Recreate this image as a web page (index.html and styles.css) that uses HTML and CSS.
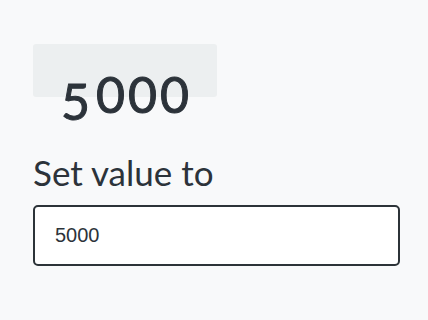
FILE: index.html
```html
<!DOCTYPE html>
<html lang="en">
<head>
<meta charset="utf-8">
<title>Counter</title>
<link rel="stylesheet" href="styles.css">
</head>
<body>
<main class="page">
  <div class="counter">
    <span class="digit digit-rolling">5</span><span class="digit">0</span><span class="digit">0</span><span class="digit">0</span>
  </div>
  <label class="field-label" for="value">Set value to</label>
  <input class="field-input" id="value" type="text" value="5000">
</main>
</body>
</html>
```
FILE: styles.css
```css
html, body {
  margin: 0;
  padding: 0;
  background: #f8f9fa;
}
.page {
  padding: 44px 28px 0 33px;
  display: flex;
  flex-direction: column;
  align-items: flex-start;
  font-family: Lato, "Noto Sans", sans-serif;
  color: #2c333a;
}
.counter {
  box-sizing: border-box;
  width: 184px;
  height: 53px;
  background: #eceff0;
  border-radius: 3px;
  padding: 25px 0 0 30px;
  display: flex;
  align-items: flex-start;
}
.digit {
  font-size: 50px;
  line-height: 1;
  font-weight: 400;
  -webkit-text-stroke: 1px #2c333a;
  letter-spacing: 3px;
  display: inline-block;
}
.digit-rolling {
  margin-right: 1px;
  transform: translate(-2px, 7px);
}
.field-label {
  margin-top: 54px;
  font-size: 35px;
  line-height: 1.2;
}
.field-input {
  box-sizing: border-box;
  margin: 12px 0 0;
  width: 367px;
  height: 61px;
  border: 2px solid #2c3338;
  border-radius: 5px;
  background: #ffffff;
  padding: 0 20px;
  font-family: "Liberation Sans", Arial, sans-serif;
  font-size: 20px;
  color: #2c333a;
  outline: none;
}
```
